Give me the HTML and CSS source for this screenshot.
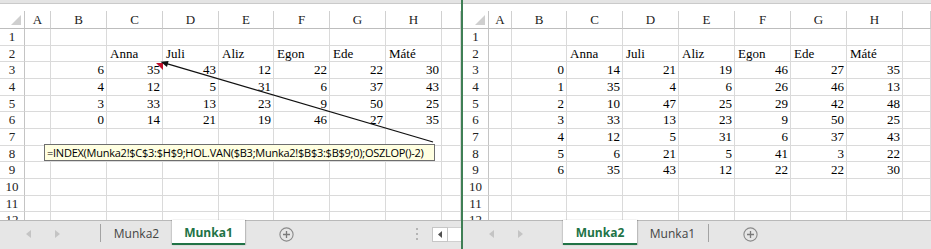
FILE: index.html
```html
<!DOCTYPE html>
<html lang="hu">
<head>
<meta charset="utf-8">
<title>Munka</title>
<link rel="stylesheet" href="styles.css">
</head>
<body>
<div class="app">
  <section class="win win-left">
    <div class="fbar"></div>
    <div class="gap"></div>
    <div class="sheet">
      <div class="row hdr">
        <div class="corner"><svg width="10" height="10" viewBox="0 0 10 10"><polygon points="10,0 10,10 0,10" fill="#cfcfcf"/></svg></div>
        <div>A</div><div>B</div><div>C</div><div>D</div><div>E</div><div>F</div><div>G</div><div>H</div><div></div>
      </div>
      <div class="row"><div class="rh">1</div><div></div><div></div><div></div><div></div><div></div><div></div><div></div><div></div><div></div></div>
      <div class="row"><div class="rh">2</div><div></div><div></div><div class="t">Anna</div><div class="t">Juli</div><div class="t">Aliz</div><div class="t">Egon</div><div class="t">Ede</div><div class="t">Máté</div><div></div></div>
      <div class="row"><div class="rh">3</div><div></div><div class="n">6</div><div class="n">35</div><div class="n">43</div><div class="n">12</div><div class="n">22</div><div class="n">22</div><div class="n">30</div><div></div></div>
      <div class="row"><div class="rh">4</div><div></div><div class="n">4</div><div class="n">12</div><div class="n">5</div><div class="n">31</div><div class="n">6</div><div class="n">37</div><div class="n">43</div><div></div></div>
      <div class="row"><div class="rh">5</div><div></div><div class="n">3</div><div class="n">33</div><div class="n">13</div><div class="n">23</div><div class="n">9</div><div class="n">50</div><div class="n">25</div><div></div></div>
      <div class="row"><div class="rh">6</div><div></div><div class="n">0</div><div class="n">14</div><div class="n">21</div><div class="n">19</div><div class="n">46</div><div class="n">27</div><div class="n">35</div><div></div></div>
      <div class="row"><div class="rh">7</div><div></div><div></div><div></div><div></div><div></div><div></div><div></div><div></div><div></div></div>
      <div class="row"><div class="rh">8</div><div></div><div></div><div></div><div></div><div></div><div></div><div></div><div></div><div></div></div>
      <div class="row"><div class="rh">9</div><div></div><div></div><div></div><div></div><div></div><div></div><div></div><div></div><div></div></div>
      <div class="row"><div class="rh">10</div><div></div><div></div><div></div><div></div><div></div><div></div><div></div><div></div><div></div></div>
      <div class="row"><div class="rh">11</div><div></div><div></div><div></div><div></div><div></div><div></div><div></div><div></div><div></div></div>
      <div class="row"><div class="rh">12</div><div></div><div></div><div></div><div></div><div></div><div></div><div></div><div></div><div></div></div>
    </div>
    <div class="tabs">
      <div class="nav">
        <svg width="5" height="8" viewBox="0 0 5 8"><polygon points="5,0 5,8 0,4" fill="#c4c4c4"/></svg>
        <svg width="5" height="8" viewBox="0 0 5 8"><polygon points="0,0 0,8 5,4" fill="#c4c4c4"/></svg>
      </div>
      <div class="sep"></div>
      <div class="tab tab-l">Munka2</div>
      <div class="tab active tab-w">Munka1</div>
      <svg class="plus" width="15" height="15" viewBox="0 0 15 15"><circle cx="7.5" cy="7.5" r="6.6" fill="none" stroke="#8a8a8a" stroke-width="1.1"/><path d="M7.5 4v7M4 7.5h7" stroke="#7a7a7a" stroke-width="1.3"/></svg>
      <svg class="grip" width="2" height="13" viewBox="0 0 2 13"><rect y="0" width="2" height="2" fill="#b4b4b4"/><rect y="5" width="2" height="2" fill="#b4b4b4"/><rect y="10" width="2" height="2" fill="#b4b4b4"/></svg>
      <div class="sbtn"><svg width="4" height="7" viewBox="0 0 4 7"><polygon points="4,0 4,7 0,3.5" fill="#505050"/></svg></div>
      <div class="strack"></div>
    </div>
    <div class="tip">=INDEX(Munka2!$C$3:$H$9;HOL.VAN($B3;Munka2!$B$3:$B$9;0);OSZLOP()-2)</div>
    <svg class="arrow" width="461" height="249" viewBox="0 0 461 249">
      <polygon points="156,63 163,63 163,70" fill="#c0102a"/>
      <line x1="433" y1="142" x2="165" y2="63.2" stroke="#111" stroke-width="1.3"/>
      <polygon points="160.5,61.8 168.6,60.9 167,67" fill="#111"/>
    </svg>
  </section>
  <div class="divider"></div>
  <section class="win win-right">
    <div class="fbar"></div>
    <div class="gap"></div>
    <div class="sheet">
      <div class="row hdr">
        <div class="corner"><svg width="10" height="10" viewBox="0 0 10 10"><polygon points="10,0 10,10 0,10" fill="#cfcfcf"/></svg></div>
        <div>A</div><div>B</div><div>C</div><div>D</div><div>E</div><div>F</div><div>G</div><div>H</div><div></div>
      </div>
      <div class="row"><div class="rh">1</div><div></div><div></div><div></div><div></div><div></div><div></div><div></div><div></div><div></div></div>
      <div class="row"><div class="rh">2</div><div></div><div></div><div class="t">Anna</div><div class="t">Juli</div><div class="t">Aliz</div><div class="t">Egon</div><div class="t">Ede</div><div class="t">Máté</div><div></div></div>
      <div class="row"><div class="rh">3</div><div></div><div class="n">0</div><div class="n">14</div><div class="n">21</div><div class="n">19</div><div class="n">46</div><div class="n">27</div><div class="n">35</div><div></div></div>
      <div class="row"><div class="rh">4</div><div></div><div class="n">1</div><div class="n">35</div><div class="n">4</div><div class="n">6</div><div class="n">26</div><div class="n">46</div><div class="n">13</div><div></div></div>
      <div class="row"><div class="rh">5</div><div></div><div class="n">2</div><div class="n">10</div><div class="n">47</div><div class="n">25</div><div class="n">29</div><div class="n">42</div><div class="n">48</div><div></div></div>
      <div class="row"><div class="rh">6</div><div></div><div class="n">3</div><div class="n">33</div><div class="n">13</div><div class="n">23</div><div class="n">9</div><div class="n">50</div><div class="n">25</div><div></div></div>
      <div class="row"><div class="rh">7</div><div></div><div class="n">4</div><div class="n">12</div><div class="n">5</div><div class="n">31</div><div class="n">6</div><div class="n">37</div><div class="n">43</div><div></div></div>
      <div class="row"><div class="rh">8</div><div></div><div class="n">5</div><div class="n">6</div><div class="n">21</div><div class="n">5</div><div class="n">41</div><div class="n">3</div><div class="n">22</div><div></div></div>
      <div class="row"><div class="rh">9</div><div></div><div class="n">6</div><div class="n">35</div><div class="n">43</div><div class="n">12</div><div class="n">22</div><div class="n">22</div><div class="n">30</div><div></div></div>
      <div class="row"><div class="rh">10</div><div></div><div></div><div></div><div></div><div></div><div></div><div></div><div></div><div></div></div>
      <div class="row"><div class="rh">11</div><div></div><div></div><div></div><div></div><div></div><div></div><div></div><div></div><div></div></div>
      <div class="row"><div class="rh">12</div><div></div><div></div><div></div><div></div><div></div><div></div><div></div><div></div><div></div></div>
    </div>
    <div class="tabs">
      <div class="nav">
        <svg width="5" height="8" viewBox="0 0 5 8"><polygon points="5,0 5,8 0,4" fill="#c4c4c4"/></svg>
        <svg width="5" height="8" viewBox="0 0 5 8"><polygon points="0,0 0,8 5,4" fill="#c4c4c4"/></svg>
      </div>
      <div class="tab active tab-w2">Munka2</div>
      <div class="tab tab-l">Munka1</div>
      <div class="sep"></div>
      <svg class="plus" width="15" height="15" viewBox="0 0 15 15"><circle cx="7.5" cy="7.5" r="6.6" fill="none" stroke="#8a8a8a" stroke-width="1.1"/><path d="M7.5 4v7M4 7.5h7" stroke="#7a7a7a" stroke-width="1.3"/></svg>
    </div>
  </section>
</div>
</body>
</html>
```

FILE: styles.css
```css
html, body {
  margin: 0;
  padding: 0;
  background: #ffffff;
}

.app {
  display: flex;
  width: 931px;
  height: 249px;
  overflow: hidden;
}

.win {
  position: relative;
  display: flex;
  flex-direction: column;
  overflow: hidden;
  height: 249px;
}

.win-left {
  width: 461px;
  --cols: 25px 26px 56px 56px 56px 55px 56px 56px 56px 1fr;
}

.win-right {
  flex: 1;
  --cols: 26px 23px 55px 56px 56px 56px 56px 56px 56px 1fr;
}

.divider {
  width: 2px;
  background: #3f7f55;
}

.fbar {
  height: 3px;
  background: #e4e4e4;
  border-bottom: 1px solid #cacaca;
  flex: none;
}

.gap {
  height: 7px;
  flex: none;
  background: #ffffff;
}

.sheet {
  height: 209px;
  flex: none;
  overflow: hidden;
  background: #ffffff;
  font-family: "Liberation Serif", "Times New Roman", serif;
  font-size: 13px;
  color: #000;
}

.row {
  display: grid;
  grid-template-columns: var(--cols);
  height: 16.667px;
}

.row > div {
  box-sizing: border-box;
  border-right: 1px solid #dadada;
  border-bottom: 1px solid #dadada;
  overflow: hidden;
  white-space: nowrap;
  line-height: 16px;
  padding: 0 2px;
}

.row > div.t {
  padding-left: 3px;
}

.row > div.n {
  text-align: right;
}

.row > div.rh {
  text-align: center;
  padding: 0;
  color: #222;
  border-right-color: #c4c4c4;
}

.hdr {
  height: 18px;
}

.hdr > div {
  text-align: center;
  line-height: 18px;
  color: #222;
  border-right-color: #d0d0d0;
  border-bottom-color: #bdbdbd;
}

.row > div.corner {
  display: flex;
  justify-content: flex-end;
  align-items: flex-end;
  padding: 0 3px 3px 0;
  border-right-color: #c4c4c4;
}

.corner svg {
  display: block;
}

/* tab bar */
.tabs {
  flex: 1;
  display: flex;
  align-items: flex-start;
  background: #e6e6e6;
  border-top: 1px solid #b9b9b9;
  font-family: "Open Sans", "Noto Sans", sans-serif;
  font-size: 12px;
  color: #444;
}

.nav {
  box-sizing: border-box;
  width: 100px;
  height: 26px;
  padding-left: 26px;
  display: flex;
  align-items: center;
  gap: 24px;
  flex: none;
}

.nav svg {
  display: block;
}

.sep {
  width: 1px;
  height: 18px;
  margin-top: 3px;
  background: #a3a3a3;
  flex: none;
}

.tab {
  box-sizing: border-box;
  height: 24px;
  display: flex;
  align-items: center;
  justify-content: center;
  flex: none;
}

.tab-l {
  width: 71px;
}

.tab.active {
  margin-top: -1px;
  height: 25px;
  padding-top: 2px;
  background: #ffffff;
  color: #217346;
  font-weight: 700;
  border-bottom: 2px solid #217346;
  box-shadow: 1px 0 1px rgba(0, 0, 0, 0.18), -1px 0 1px rgba(0, 0, 0, 0.12);
}

.tab-w {
  width: 73px;
}

.tab-w2 {
  width: 74px;
}

.plus {
  display: block;
  flex: none;
  margin-left: 34px;
  margin-top: 6px;
}

.grip {
  display: block;
  flex: none;
  margin-left: 122px;
  margin-top: 7px;
}

.sbtn {
  box-sizing: border-box;
  flex: none;
  width: 16px;
  height: 15px;
  margin-left: 14px;
  margin-top: 6px;
  background: #ffffff;
  border: 1px solid #c6c6c6;
  display: flex;
  align-items: center;
  justify-content: center;
}

.sbtn svg {
  display: block;
}

.strack {
  flex: 1;
  height: 15px;
  margin-top: 6px;
  background: #ffffff;
  box-sizing: border-box;
  border-top: 1px solid #d0d0d0;
  border-bottom: 1px solid #d0d0d0;
}

/* formula tooltip and trace arrow (overlays) */
.tip {
  position: absolute;
  left: 44px;
  top: 144px;
  width: 391px;
  height: 17px;
  box-sizing: border-box;
  border: 1px solid #6e6e6e;
  background: #ffffe1;
  font-family: "Open Sans", "Noto Sans", sans-serif;
  font-size: 11px;
  letter-spacing: -0.25px;
  line-height: 15px;
  padding-left: 2px;
  color: #000;
  white-space: nowrap;
  overflow: hidden;
}

.arrow {
  position: absolute;
  left: 0;
  top: 0;
  pointer-events: none;
}
```
